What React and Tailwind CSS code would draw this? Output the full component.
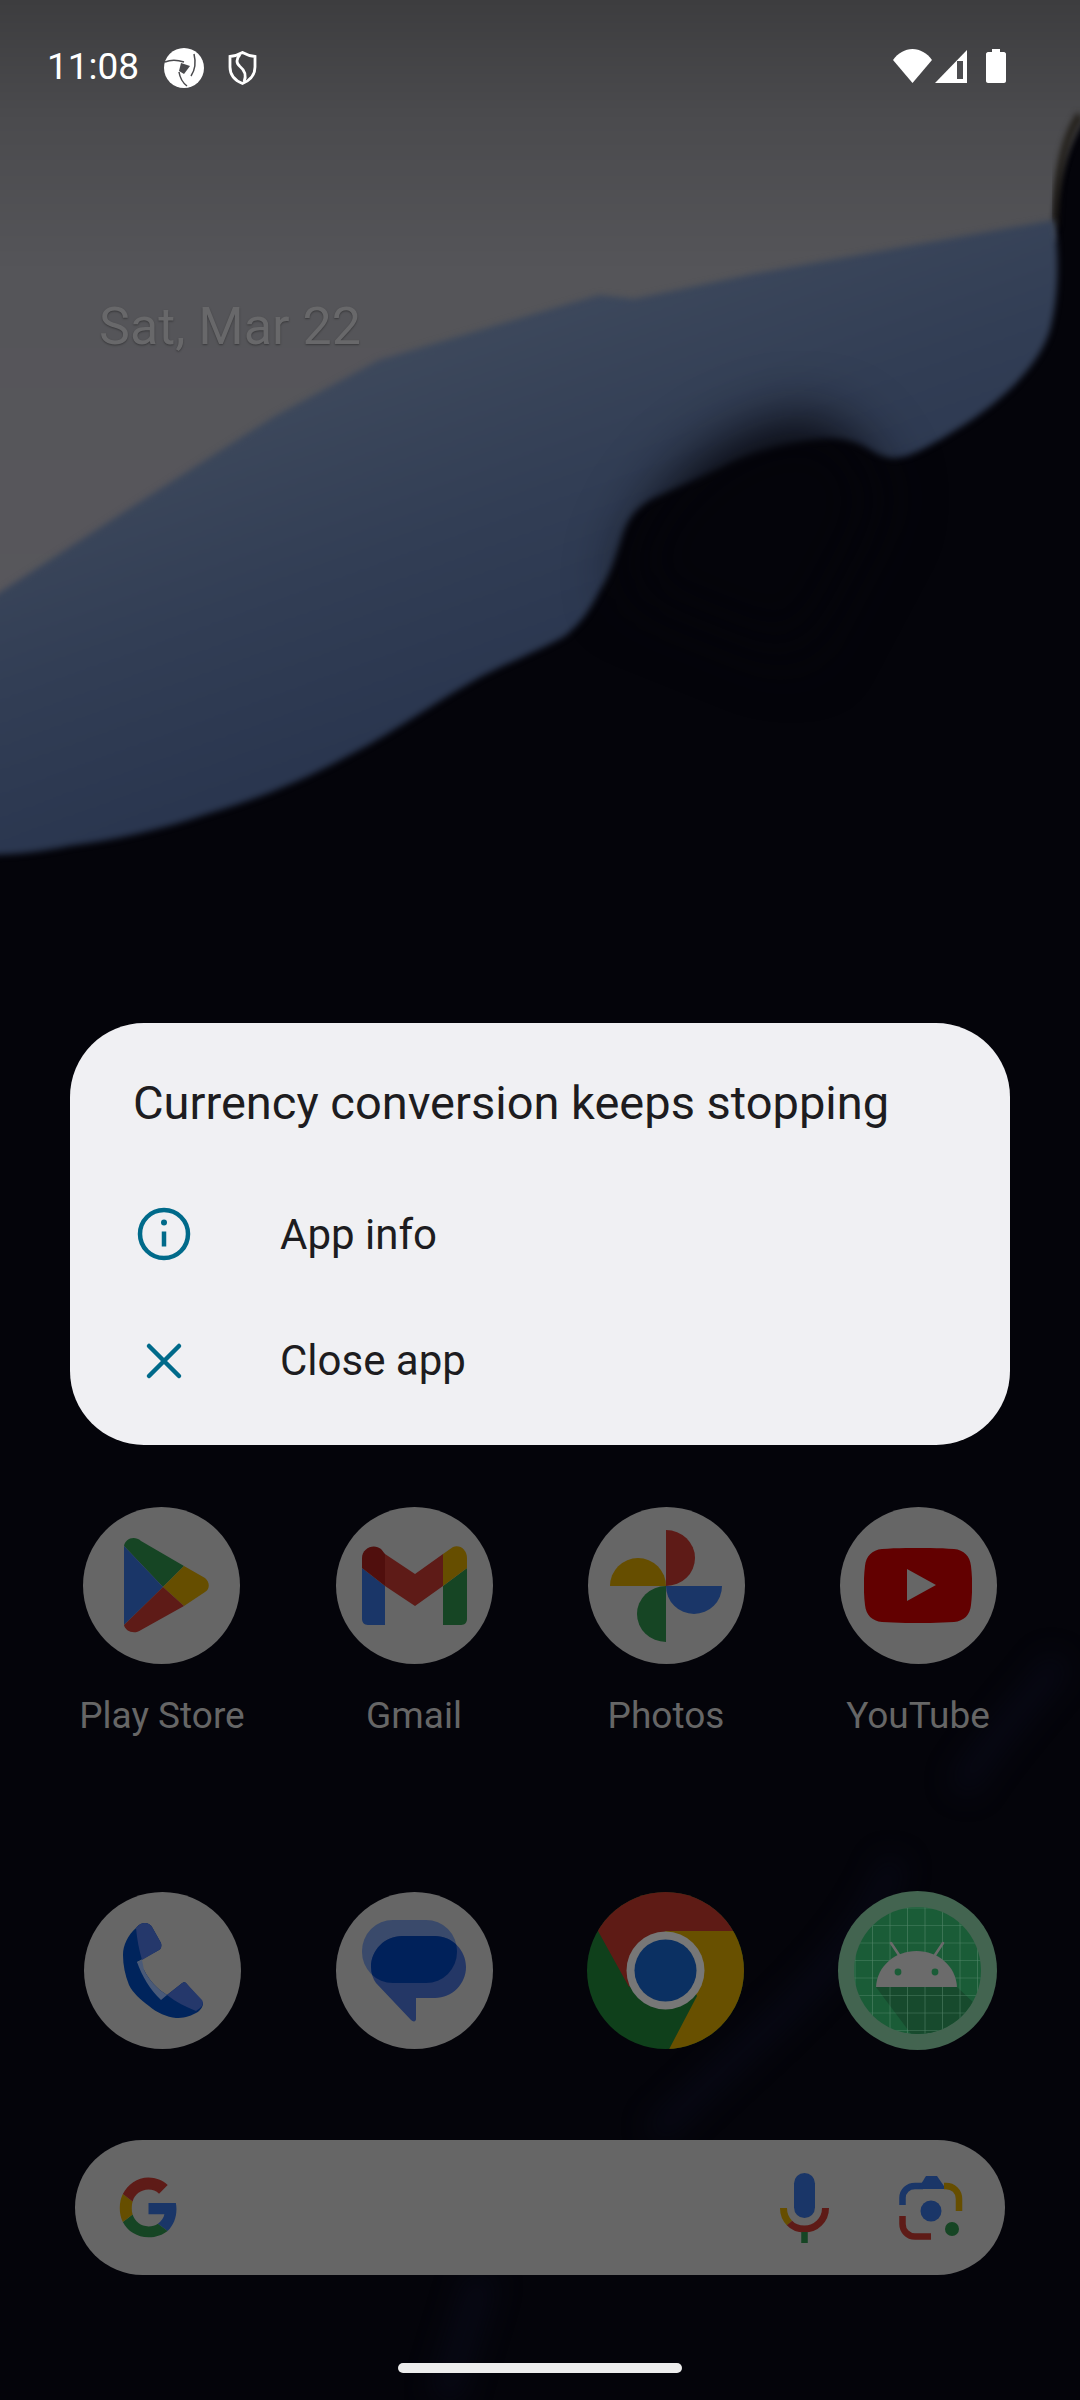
const roboto = { fontFamily: 'Roboto, "Noto Sans", sans-serif' };

const RED = '#5e1b17';
const BLUE = '#1a3668';
const GREEN = '#164524';
const YELLOW = '#664e00';

function Wallpaper() {
  return (
    <svg className="absolute inset-0" width="1080" height="2400" viewBox="0 0 1080 2400" fill="none">
      <defs>
        <linearGradient id="top" gradientUnits="userSpaceOnUse" x1="0" y1="0" x2="0" y2="600">
          <stop offset="0" stopColor="#3d3d3f" />
          <stop offset="0.2" stopColor="#4b4b4e" />
          <stop offset="0.45" stopColor="#555559" />
          <stop offset="1" stopColor="#58575c" />
        </linearGradient>
        <linearGradient id="blue" gradientUnits="userSpaceOnUse" x1="300" y1="300" x2="480" y2="800">
          <stop offset="0" stopColor="#424d5f" />
          <stop offset="0.5" stopColor="#323e55" />
          <stop offset="1" stopColor="#26324c" />
        </linearGradient>
        <filter id="soft" x="-5%" y="-5%" width="110%" height="110%" colorInterpolationFilters="sRGB"><feGaussianBlur stdDeviation="3" /></filter>
        <filter id="hump" x="-50%" y="-50%" width="200%" height="200%" colorInterpolationFilters="sRGB"><feGaussianBlur stdDeviation="30" /></filter>
        <filter id="streak" x="-50%" y="-50%" width="200%" height="200%" colorInterpolationFilters="sRGB"><feGaussianBlur stdDeviation="14" /></filter>
      </defs>
      <rect width="1080" height="2400" fill="#04040a" />
      <path filter="url(#soft)" d="M-20 -20H1100V100C1075 125 1056 170 1054 225V240L-20 620Z" fill="url(#top)" />
      <path d="M1078 112C1062 135 1052 175 1054 225L1058 228C1058 180 1066 140 1082 118Z" fill="#1b1710" filter="url(#soft)" />
      <path filter="url(#soft)" d="M-20 605L138 503L275 416L379 360L551 309L599 295L634 299L758 273L1054 220C1060 260 1058 300 1050 330C1040 362 1010 395 964 425C935 443 910 458 895 458C880 458 872 450 861 445C845 438 828 438 813 440C780 445 745 455 723 467C695 480 672 490 654 498C635 508 628 520 623 534C615 560 610 575 599 592C585 620 572 630 565 636C540 650 510 662 482 676C430 705 390 735 344 758C300 782 255 800 207 814C160 830 115 840 69 846C40 852 15 855 -20 855Z" fill="url(#blue)" />
      <path filter="url(#hump)" d="M625 590C640 505 705 440 790 420C830 413 860 440 885 500L800 660Z" fill="#04040a" />
      <g stroke="#0a0c1c" filter="url(#streak)" fill="none" opacity="0.6">
        <path d="M895 1860C860 1960 760 2030 654 2135" strokeWidth="24" />
        <path d="M1060 1660C1030 1700 990 1740 960 1790" strokeWidth="26" />
        <path d="M482 2275C470 2320 455 2360 445 2400" strokeWidth="30" />
      </g>
    </svg>
  );
}

function StatusBar() {
  return (
    <div className="flex h-[132px] items-center justify-between pl-[47px] pr-[74px] text-white">
      <div className="flex items-center">
        <span className="text-[37px] leading-none" style={roboto}>11:08</span>
        <svg className="ml-[25px] mt-[4px]" width="40" height="40" viewBox="0 0 40 40" fill="none">
          <circle cx="20" cy="20" r="20" fill="#fff" />
          <path d="M1 14C8 11 14 12 20 14" stroke="#4a4a4d" strokeWidth="1.500" />
          <path d="M30 6C32 14 31 22 27 28" stroke="#4a4a4d" strokeWidth="1.500" />
          <path d="M15 24C16 30 19 35 23 38" stroke="#4a4a4d" strokeWidth="1.500" />
          <path d="M17 15L26 18L20 26L15 23Z" fill="#4a4a4d" />
        </svg>
        <svg className="ml-[24px] mt-[3px]" width="29" height="34" viewBox="0 0 29 34" fill="none">
          <path d="M14.500 1.500C18 3.500 22 5 27 5.500V16C27 24 22 29.500 14.500 32.500C7 29.500 2 24 2 16V5.500C7 5 11 3.500 14.500 1.500Z" stroke="#fff" strokeWidth="2.800" />
          <path d="M12 3.500C8 8 8 12 12 15.500C17 19.500 18.500 25 16 31" stroke="#fff" strokeWidth="2.800" />
        </svg>
      </div>
      <div className="flex items-center">
        <svg width="39" height="34" viewBox="0 0 39 34"><path d="M0 11C5 4 12 0 19.500 0C27 0 34 4 39 11L19.500 34Z" fill="#fff" /></svg>
        <svg className="ml-[3px]" width="32" height="33" viewBox="0 0 32 33"><path d="M32 0V33H0Z" fill="#fff" /><path d="M22 11H28V29H22Z" fill="#4d4d50" /></svg>
        <svg className="ml-[19px]" width="20" height="34" viewBox="0 0 20 34"><path d="M6 0H14V3H18C19 3 20 4 20 5V32C20 33 19 34 18 34H2C1 34 0 33 0 32V5C0 4 1 3 2 3H6Z" fill="#fff" /></svg>
      </div>
    </div>
  );
}

function Play() {
  return (
    <svg className="ml-[9px]" width="85" height="95" viewBox="0 0 85 95">
      <path d="M0 8C1 1 10 -3 17 3L60 28L39 49Z" fill={GREEN} />
      <path d="M0 8L39 49L0 87Z" fill={BLUE} />
      <path d="M60 28L81 40C86 44 86 51 81 54L60 68L39 49Z" fill={YELLOW} />
      <path d="M0 87L39 49L60 68L17 92C10 97 1 93 0 87Z" fill={RED} />
    </svg>
  );
}
function Gmail() {
  return (
    <svg width="105" height="79" viewBox="0 0 105 79">
      <path d="M0 22L23 40V79H6C2 79 0 76 0 73Z" fill={BLUE} />
      <path d="M81 40L105 22V73C105 76 103 79 99 79H81Z" fill={GREEN} />
      <path d="M81 8L91 1C97 -2 105 3 105 12V22L81 40Z" fill={YELLOW} />
      <path d="M23 8L53 28L81 8V40L53 60L23 40Z" fill={RED} />
      <path d="M0 12C0 2 12 -3 19 3L23 8V40L0 22Z" fill="#500f0d" />
    </svg>
  );
}
function Photos() {
  return (
    <svg width="112" height="112" viewBox="0 0 112 112">
      <path d="M56 0A29 28 0 0 1 56 56Z" fill={RED} />
      <path d="M0 56A28 28 0 0 1 56 56Z" fill={YELLOW} />
      <path d="M56 56H112A28 28 0 0 1 56 56Z" fill={BLUE} />
      <path d="M56 112A29 28 0 0 1 56 56Z" fill={GREEN} />
    </svg>
  );
}
function YouTube() {
  return (
    <svg width="108" height="75" viewBox="0 0 108 75">
      <path d="M18 1C40 -0.500 68 -0.500 90 1C100 2 106 8 107 18C108.500 30 108.500 45 107 57C106 67 100 73 90 74C68 75.500 40 75.500 18 74C8 73 2 67 1 57C-0.500 45 -0.500 30 1 18C2 8 8 2 18 1Z" fill="#620000" />
      <path d="M43 21L72 37L43 53Z" fill="#666666" />
    </svg>
  );
}
function Phone() {
  return (
    <svg width="80" height="95" viewBox="0 0 80 95">
      <path d="M13 5C16 1 19 0 22 0C25 0 28 2 29 4L38 20C39 23 38 26 36 27L14 39L21 47C26 57 34 66 44 72L58 61C60 59 62 59 63 60L80 80C80 84 77 88 73 90C66 94 60 95 53 95C44 94 34 90 26 83C17 76 10 70 6 62C2 52 0 42 0 32C0 22 5 12 13 5Z" fill="#00245c" />
      <path d="M13 5C16 1 19 0 22 0C25 0 28 2 29 4L38 20C39 23 38 26 36 27L19 37C16 27 14 16 13 5Z" fill="#25386b" />
      <path d="M44 72L58 61C60 59 62 59 63 60L79 77C81 80 80 84 73 88C63 84 53 79 44 72Z" fill="#25386b" />
      <path d="M14 39L19 37L21 47C26 57 34 66 44 72L38 77C27 67 19 53 14 39Z" fill="#4a5a78" />
    </svg>
  );
}
function Messages() {
  const tail = 'M9 47C9 30 23 16 40 16H73C90 16 104 30 104 47C104 64 90 78 73 78H54V99C54 102 51 102 49 100L14 63C11 59 9 53 9 47Z';
  return (
    <svg width="104" height="102" viewBox="0 0 104 102">
      <defs>
        <clipPath id="first"><rect width="95" height="63" rx="31" /></clipPath>
      </defs>
      <rect width="95" height="63" rx="31" fill="#3a4a6b" />
      <path d={tail} fill="#243766" />
      <path d={tail} fill="#00215a" clipPath="url(#first)" />
    </svg>
  );
}
function Chrome() {
  return (
    <svg width="157" height="157" viewBox="0 0 157 157">
      <defs><clipPath id="cc"><circle cx="78.500" cy="78.500" r="78.500" /></clipPath></defs>
      <g clipPath="url(#cc)">
        <rect width="157" height="157" fill="#0f401b" />
        <path d="M11 39H160V-5H-5V39ZM11 39L42 95L78 60V39Z" fill="#5e1b15" />
        <path d="M78 39H165V165H78L110 104Z" fill="#685000" />
      </g>
      <circle cx="78.500" cy="78.500" r="39" fill="#777777" />
      <circle cx="78.500" cy="78.500" r="31" fill="#0b3062" />
    </svg>
  );
}
function Android() {
  return (
    <svg width="159" height="159" viewBox="0 0 159 159">
      <defs>
        <clipPath id="ac"><circle cx="79.500" cy="79.500" r="63.500" /></clipPath>
        <pattern id="grid" width="17.500" height="17.500" patternUnits="userSpaceOnUse" x="0" y="0">
          <path d="M17.500 0V17.500M0 17.500H17.500" stroke="#6c9880" strokeWidth="1.200" fill="none" opacity="0.65" />
        </pattern>
      </defs>
      <circle cx="79.500" cy="79.500" r="79.500" fill="#436450" />
      <g clipPath="url(#ac)">
        <rect width="159" height="159" fill="#1a5c37" />
        <path d="M38 96H119L160 135V159H85Z" fill="#174a2d" />
        <rect width="159" height="159" fill="url(#grid)" />
      </g>
      <path d="M61 64L53 52M97 64L105 52" stroke="#6b6b6b" strokeWidth="2.600" strokeLinecap="round" />
      <path d="M38 96C39 75 57 60 78.500 60C100 60 118 75 119 96Z" fill="#6b6b6b" />
      <circle cx="60" cy="81" r="3.400" fill="#1a5c37" />
      <circle cx="97" cy="81" r="3.400" fill="#1a5c37" />
    </svg>
  );
}
function Google() {
  return (
    <svg width="61" height="62" viewBox="0 0 48 48">
      <path d="M46 24.500C46 23 45.800 21.500 45.500 20H24V29H36.500C36 32 34 34.600 31.400 36.300L39 42C43.400 37.900 46 31.800 46 24.500Z" fill={BLUE} />
      <path d="M24 47C30 47 35.400 45 39 42L31.400 36.300C29.400 37.700 26.900 38.500 24 38.500C18 38.500 13.200 34.600 11.500 29.200L3.800 35C7.500 42.300 15.100 47 24 47Z" fill={GREEN} />
      <path d="M11.500 29.200C10.600 26.400 10.600 21.600 11.500 18.800L3.800 13C0.600 19.300 0.600 28.700 3.800 35Z" fill={YELLOW} />
      <path d="M24 9.500C27.200 9.500 30.100 10.600 32.300 12.700L39.100 5.900C35.100 2.200 29.900 0 24 0C15.100 0 7.500 5.700 3.800 13L11.500 18.800C13.200 13.400 18 9.500 24 9.500Z" fill={RED} />
    </svg>
  );
}
function Mic() {
  return (
    <svg width="49" height="70" viewBox="0 0 49 70" fill="none">
      <rect x="14" y="0" width="21" height="45" rx="10.500" fill={BLUE} />
      <path d="M3.500 35C3.500 41 5.500 46 9.500 50" stroke={YELLOW} strokeWidth="7" />
      <path d="M9.500 50C13 54 18 56 24.500 56C36 56 45.500 47 45.500 35" stroke={RED} strokeWidth="7" />
      <path d="M24.500 59V70" stroke={GREEN} strokeWidth="6.500" />
    </svg>
  );
}
function Lens() {
  return (
    <svg width="64" height="64" viewBox="0 0 64 64" fill="none">
      <path d="M3.500 29V22C3.500 15 9 10 16 10H24" stroke={BLUE} strokeWidth="6.500" />
      <path d="M19 13L27 0H38L47 13Z" fill={BLUE} />
      <path d="M45 10H47C54 10 60 15 60 23V35" stroke={YELLOW} strokeWidth="6.500" />
      <path d="M3.500 40V48C3.500 55 9 60.500 16 60.500H32" stroke={RED} strokeWidth="6.500" />
      <circle cx="32" cy="35" r="10.500" fill={BLUE} />
      <circle cx="53" cy="53" r="7" fill={GREEN} />
    </svg>
  );
}

function AppIcon({ children, label }) {
  return (
    <div className="flex flex-col items-center">
      <div className="flex h-[157px] w-[157px] items-center justify-center rounded-full bg-[#666666]">{children}</div>
      {label && (
        <span className="mt-[34px] whitespace-nowrap text-[37px] leading-[35px] text-[#666666]" style={roboto}>{label}</span>
      )}
    </div>
  );
}

function Dialog() {
  return (
    <div className="absolute left-[70px] top-[1023px] h-[422px] w-[940px] rounded-[74px] bg-[#f0f0f3] text-[#1d1c20]" style={roboto}>
      <div className="pl-[63px] pt-[52px] text-[47px] leading-[56px]">Currency conversion keeps stopping</div>
      <div className="mt-[40px] flex h-[126px] items-center pl-[64px]">
        <svg width="60" height="60" viewBox="0 0 60 60" fill="none">
          <circle cx="30" cy="30" r="24" stroke="#006a8a" strokeWidth="4.500" />
          <path d="M30 27.500V42.500" stroke="#006a8a" strokeWidth="4.500" />
          <circle cx="30" cy="18.500" r="3" fill="#006a8a" />
        </svg>
        <span className="ml-[86px] text-[42px]">App info</span>
      </div>
      <div className="flex h-[127px] items-center pl-[64px]">
        <svg width="60" height="60" viewBox="0 0 60 60" fill="none">
          <path d="M15 15L45 45M45 15L15 45" stroke="#006a8a" strokeWidth="4.500" strokeLinecap="round" />
        </svg>
        <span className="ml-[86px] text-[42px]">Close app</span>
      </div>
    </div>
  );
}

export default function App() {
  return (
    <div className="relative h-[2400px] w-[1080px] overflow-hidden bg-[#04040a]">
      <Wallpaper />
      <div className="relative flex h-full flex-col">
        <StatusBar />
        <div className="pl-[99px] pt-[165px] text-[52px] leading-[60px] text-[#68686a]" style={{ ...roboto, textShadow: '0 1px 2px rgba(0,0,0,.35)' }}>Sat, Mar 22</div>
        <div className="mt-[1150px] grid grid-cols-4 px-[36px]">
          <div className="flex justify-center"><AppIcon label="Play Store"><Play /></AppIcon></div>
          <div className="flex justify-center"><AppIcon label="Gmail"><Gmail /></AppIcon></div>
          <div className="flex justify-center"><AppIcon label="Photos"><Photos /></AppIcon></div>
          <div className="flex justify-center"><AppIcon label="YouTube"><YouTube /></AppIcon></div>
        </div>
        <div className="mt-[158px] grid grid-cols-4 items-center px-[37px]">
          <div className="flex justify-center"><AppIcon><Phone /></AppIcon></div>
          <div className="flex justify-center"><AppIcon><Messages /></AppIcon></div>
          <div className="flex justify-center"><Chrome /></div>
          <div className="flex justify-center"><Android /></div>
        </div>
        <div className="mx-[75px] mt-[90px] flex h-[135px] items-center rounded-full bg-[#666666] pl-[43px] pr-[42px]">
          <Google />
          <div className="ml-auto flex"><Mic /></div>
          <div className="ml-[70px] flex"><Lens /></div>
        </div>
        <div className="mx-auto mt-[88px] h-[10px] w-[284px] rounded-full bg-[#ededed]" />
      </div>
      <Dialog />
    </div>
  );
}
